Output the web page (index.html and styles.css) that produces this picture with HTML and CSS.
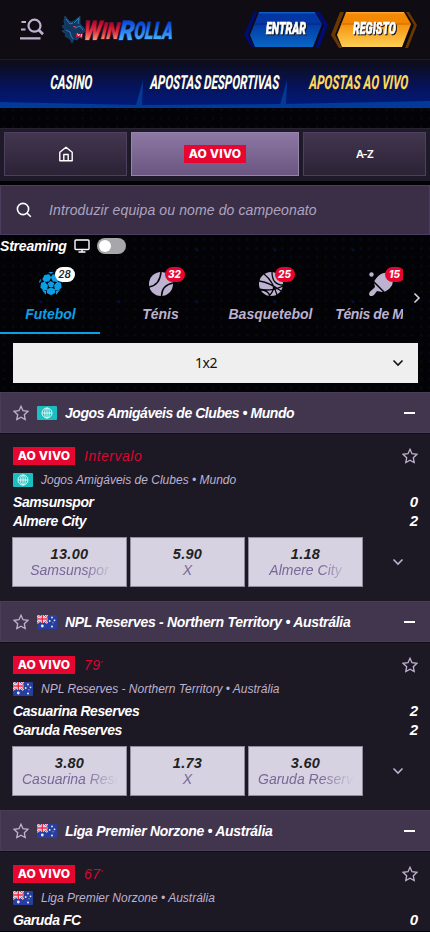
FILE: index.html
```html
<!DOCTYPE html>
<html lang="pt">
<head>
<meta charset="utf-8">
<meta name="viewport" content="width=device-width, initial-scale=1">
<title>WinRolla</title>
<link rel="stylesheet" href="styles.css">
</head>
<body>
<svg class="defs" width="0" height="0" aria-hidden="true">
  <defs>
    <linearGradient id="red" x1="0" y1="0" x2="0" y2="1"><stop offset="0.2" stop-color="#b8002c"/><stop offset="0.55" stop-color="#e23a48"/><stop offset="0.9" stop-color="#ffc38c"/></linearGradient>
    <linearGradient id="blue" x1="0" y1="0" x2="0" y2="1"><stop offset="0.2" stop-color="#0a46d8"/><stop offset="0.9" stop-color="#55c4ff"/></linearGradient>
    <linearGradient id="btnBlue" x1="0" y1="0" x2="0" y2="1"><stop offset="0" stop-color="#02359f"/><stop offset="0.33" stop-color="#0437a5"/><stop offset="0.36" stop-color="#023ba6"/><stop offset="1" stop-color="#0866c4"/></linearGradient>
    <linearGradient id="btnGold" x1="0" y1="0" x2="0" y2="1"><stop offset="0" stop-color="#f58a05"/><stop offset="0.34" stop-color="#f38600"/><stop offset="0.38" stop-color="#f59510"/><stop offset="1" stop-color="#ffd055"/></linearGradient>
    <clipPath id="ball"><circle cx="12" cy="12" r="12"/></clipPath>
    <path id="patch" d="M12 .8l4.200 2.200v3.600L12 8.800 7.800 6.600V3z"/>
  </defs>
  <symbol id="star" viewBox="0 0 16 16"><path d="M8 1.300 10 5.700l4.900.6-3.600 3.400.9 4.900L8 12.300l-4.200 2.300.9-4.900L1.100 6.300 6 5.700z" fill="none" stroke="#bdb2cf" stroke-width="1.300"/></symbol>
  <symbol id="chev" viewBox="0 0 12 8"><path d="m1.500 1.500 4.500 4.500 4.500-4.500" fill="none" stroke="currentColor" stroke-width="1.600"/></symbol>
  <symbol id="world" viewBox="0 0 20 14"><rect width="20" height="14" rx="1" fill="#1cbfc0"/><g fill="none" stroke="#d9f6f4"><circle cx="10" cy="7" r="5"/><ellipse cx="10" cy="7" rx="2.300" ry="5"/><path d="M5 7h10M10 2v10"/></g></symbol>
  <symbol id="aus" viewBox="0 0 20 14"><rect width="20" height="14" rx="1" fill="#263fa0"/><path d="M0 0l10.500 8M10.500 0 0 8" stroke="#fff" stroke-width="2.200"/><path d="M0 0l10.500 8M10.500 0 0 8" stroke="#e8304a" stroke-width=".9"/><path d="M5.300 0v8M0 4h10.500" stroke="#fff" stroke-width="2.800"/><path d="M5.300 0v8M0 4h10.500" stroke="#e8283f" stroke-width="1.500"/><g fill="#e8edff"><circle cx="5.300" cy="11" r="1.400"/><circle cx="15" cy="2.500" r=".9"/><circle cx="12.700" cy="6" r=".9"/><circle cx="17.500" cy="5.300" r=".9"/><circle cx="15" cy="11.500" r="1"/><circle cx="16" cy="7.800" r=".5"/></g></symbol>
</svg>

<header class="top">
  <svg class="menu" width="26" height="24" viewBox="0 0 26 24" fill="none" stroke="#bdb2cf" stroke-width="2.200"><path d="M1.500 4h4.500M1 11.500h4.500M0 20.300h20.500"/><circle cx="14.500" cy="7.700" r="6"/><path d="m18.500 11.700 4.500 4.500" stroke-width="2.700"/></svg>
  <svg class="logo" width="114" height="30" viewBox="0 0 114 30">
    <path d="M4 1l5 6 4-1 6-5v8l4 4 1 3-3 3-3 0 1 3-3 3-3-1-2 4-2-4-5-3 1-2-4-3 3-1-3-4 3-1-1-4z" fill="#12365f" stroke="#1d578c" stroke-width=".6"/>
    <path d="M5 4l4 5 3-1M13 8l5-5-1 6M5 15l4 2 1 4 2 3M14 13l5-2 3 4" fill="none" stroke="#3e91cd" stroke-width=".8"/>
    <path d="m15 18 4 1 3 0-1 5-3-2-3 1z" fill="#b91c36"/><path d="m16.500 18.500 1 2.500 1-2m2 0-.5 3" stroke="#fff" stroke-width=".8" fill="none"/><path d="m12 11 3.500.6-2.500 1z" fill="#ff4b32"/>
    <g font-family="Roboto" font-weight="900" font-style="italic" stroke-width="1.100" paint-order="stroke" transform="skewX(-5) translate(1.800 0)">
      <text x="22" y="24.500" font-size="27" fill="url(#red)" stroke="#5a142b" textLength="18" lengthAdjust="spacingAndGlyphs">W</text>
      <text x="40" y="24.500" font-size="23" fill="url(#red)" stroke="#5a142b" textLength="18" lengthAdjust="spacingAndGlyphs">IN</text>
      <text x="58" y="24.500" font-size="27" fill="url(#blue)" stroke="#093583" textLength="15" lengthAdjust="spacingAndGlyphs">R</text>
      <text x="73" y="24.500" font-size="24" fill="url(#blue)" stroke="#093583" textLength="39" lengthAdjust="spacingAndGlyphs">OLLA</text>
    </g>
  </svg>
  <div class="auth">
    <svg width="84" height="37" viewBox="0 0 84 37">
      <path d="M10 0h66l8 13-9 23H8L0 23z" fill="#000c75"/><path d="M13 0h59l8 13-9 23H11L4 23z" fill="#0c0b12"/><path d="M15 0h56l7 12-9 23H11L6 23z" fill="url(#btnBlue)"/><path d="M10 12h68" stroke="#05237c"/><path d="M15 .8h56" stroke="#1470dd"/>
      <text x="22" y="22" class="btn-text" textLength="40" lengthAdjust="spacingAndGlyphs">ENTRAR</text>
    </svg>
    <svg width="87" height="37" viewBox="0 0 87 37">
      <path d="M9 0h69l8 13-9 23H8L0 23z" fill="#6b3700"/><path d="M13 0h62l8 13-9 23H11L4 23z" fill="#0c0b12"/><path d="M15 0h58l7 12-9 23H11L6 23z" fill="url(#btnGold)"/><path d="M10 12h69" stroke="#c96e07"/><path d="M15 .8h58" stroke="#ffb044"/>
      <text x="22" y="22" class="btn-text" textLength="43" lengthAdjust="spacingAndGlyphs">REGISTO</text>
    </svg>
  </div>
</header>

<nav class="main-nav">
  <svg width="430" height="48" viewBox="0 0 430 48">
    <path d="M0 42l140 3 140-1 150-3v7H0z" fill="#013a99"/><path d="M136 45 143 20l-1 25zM280 45l7-25-1 25z" fill="#023b96"/>
    <g class="nav-text" transform="skewX(-3) translate(1.500 0)">
      <text x="50" y="29.500" textLength="42" lengthAdjust="spacingAndGlyphs">CASINO</text>
      <text x="150" y="29.500" textLength="129" lengthAdjust="spacingAndGlyphs">APOSTAS DESPORTIVAS</text>
      <text x="309" y="29.500" fill="#ffd65a" textLength="99" lengthAdjust="spacingAndGlyphs">APOSTAS AO VIVO</text>
    </g>
  </svg>
</nav>

<main>
  <div class="tabs">
    <div class="tab"><svg width="16" height="16" viewBox="0 0 16 16" fill="none" stroke="#fff" stroke-width="1.400" stroke-linejoin="round"><path d="M1.800 6.300 8 1.200l6.200 5.100v8.500H1.800zM5.800 14.800V8.500h4.400v6.300"/></svg></div>
    <div class="tab on"><span class="live">AO VIVO</span></div>
    <div class="tab az">A-Z</div>
  </div>
  <div class="search">
    <svg width="16" height="16" viewBox="0 0 16 16" fill="none" stroke="#fff" stroke-width="1.600"><circle cx="7" cy="7" r="5.600"/><path d="m11 11 3.800 3.800"/></svg>
    <span>Introduzir equipa ou nome do campeonato</span>
  </div>
  <div class="streaming"><b>Streaming</b>
    <svg width="16" height="14" viewBox="0 0 16 14" fill="none" stroke="#fff" stroke-width="1.400"><rect x="1" y="1" width="14" height="9.500" rx="1"/><path d="M8 10.500v2.500M4.500 13h7"/></svg>
    <i class="switch"></i>
  </div>
  <div class="sports-row">
    <div class="sports">
      <div class="sport on">
        <div class="pic"><svg width="24" height="24" viewBox="0 0 24 24"><g clip-path="url(#ball)" fill="#0ba0e6"><path d="m12 9 3.200 2.300-1.200 3.800h-4l-1.200-3.800z"/><use href="#patch" transform="rotate(36 12 12)"/><use href="#patch" transform="rotate(108 12 12)"/><use href="#patch" transform="rotate(180 12 12)"/><use href="#patch" transform="rotate(252 12 12)"/><use href="#patch" transform="rotate(324 12 12)"/><path d="M9 0h6l-3 2zM23 6l2 6-3-3zM21 18l-4 5 0-4zM1 6l-2 6 3-3zM3 18l4 5 0-4z"/></g></svg><span class="count">28</span></div>
        <span class="name">Futebol</span>
      </div>
      <div class="sport">
        <div class="pic"><svg width="24" height="24" viewBox="0 0 24 24"><circle cx="12" cy="12" r="12" fill="#bdb2cf"/><path d="M0 15Q11 13 12 0M12.500 24Q13 13 24 11" fill="none" stroke="#05060b" stroke-width="1.500"/></svg><span class="count">32</span></div>
        <span class="name">Ténis</span>
      </div>
      <div class="sport">
        <div class="pic"><svg width="24" height="24" viewBox="0 0 24 24"><circle cx="12" cy="12" r="12" fill="#bdb2cf"/><path d="M5 2q9 7 13 21M0 9q10 1 22 10M0 17q11 3 24-3M10 24q6-6 4-11M13 0q0 13 11 13M1 18q8 0 10 6" fill="none" stroke="#05060b" stroke-width="1.300"/></svg><span class="count">25</span></div>
        <span class="name">Basquetebol</span>
      </div>
      <div class="sport">
        <div class="pic"><svg width="24" height="24" viewBox="0 0 24 24"><circle cx="2.500" cy="2.500" r="2.200" fill="#bdb2cf"/><path d="M6 8Q13-2 21 2q6 7 0 14-4 4-8 4l-5-1-3 4Q1 26 0 22q0-2 4-5l2-2-1-5z" fill="#bdb2cf"/><path d="m4 9 11 11" stroke="#05060b" stroke-width="1.500"/></svg><span class="count">15</span></div>
        <span class="name mesa">Ténis de Mesa</span>
      </div>
    </div>
    <svg class="next" width="8" height="12" viewBox="0 0 8 12"><path d="m1.500 1.500 4.500 4.500L1.500 10.500" fill="none" stroke="#d7d1e0" stroke-width="1.600"/></svg>
  </div>
  <div class="select"><span>1x2</span><svg class="sel-chev" width="12" height="8"><use href="#chev"/></svg></div>

  <section>
    <div class="head"><svg width="16" height="16"><use href="#star"/></svg><svg width="20" height="14"><use href="#world"/></svg><h2 class="tight">Jogos Amigáveis de Clubes • Mundo</h2><i class="minus"></i></div>
    <div class="match">
      <div class="status"><span class="live">AO VIVO</span><em>Intervalo</em><svg width="16" height="16"><use href="#star"/></svg></div>
      <div class="league"><svg width="20" height="14"><use href="#world"/></svg><span>Jogos Amigáveis de Clubes • Mundo</span></div>
      <div class="team"><span>Samsunspor</span><b>0</b></div>
      <div class="team"><span>Almere City</span><b>2</b></div>
      <div class="odds">
        <div class="odd"><b>13.00</b><span class="fade-s">Samsunspor</span></div>
        <div class="odd"><b>5.90</b><span>X</span></div>
        <div class="odd"><b>1.18</b><span class="fade-s">Almere City</span></div>
        <svg width="12" height="8"><use href="#chev"/></svg>
      </div>
    </div>
  </section>
  <section>
    <div class="head"><svg width="16" height="16"><use href="#star"/></svg><svg width="20" height="14"><use href="#aus"/></svg><h2>NPL Reserves - Northern Territory • Austrália</h2><i class="minus"></i></div>
    <div class="match">
      <div class="status"><span class="live">AO VIVO</span><em>79<small>'</small></em><svg width="16" height="16"><use href="#star"/></svg></div>
      <div class="league"><svg width="20" height="14"><use href="#aus"/></svg><span>NPL Reserves - Northern Territory • Austrália</span></div>
      <div class="team"><span>Casuarina Reserves</span><b>2</b></div>
      <div class="team"><span>Garuda Reserves</span><b>2</b></div>
      <div class="odds">
        <div class="odd"><b>3.80</b><span class="fade">Casuarina Reserves</span></div>
        <div class="odd"><b>1.73</b><span>X</span></div>
        <div class="odd"><b>3.60</b><span class="fade">Garuda Reserves</span></div>
        <svg width="12" height="8"><use href="#chev"/></svg>
      </div>
    </div>
  </section>
  <section>
    <div class="head"><svg width="16" height="16"><use href="#star"/></svg><svg width="20" height="14"><use href="#aus"/></svg><h2>Liga Premier Norzone • Austrália</h2><i class="minus"></i></div>
    <div class="match last">
      <div class="status"><span class="live">AO VIVO</span><em>67<small>'</small></em><svg width="16" height="16"><use href="#star"/></svg></div>
      <div class="league"><svg width="20" height="14"><use href="#aus"/></svg><span>Liga Premier Norzone • Austrália</span></div>
      <div class="team"><span>Garuda FC</span><b>0</b></div>
    </div>
  </section>
</main>
</body>
</html>
```
FILE: styles.css
```css
* { box-sizing: border-box; }
html, body { height: 932px; overflow: hidden; }
body {
  margin: 0;
  width: 430px;
  color: #fff;
  font: 14px/18px "Liberation Sans", sans-serif;
  background-color: #030306;
  background-image:
    radial-gradient(circle, #04103c 0 1px, transparent 1.800px),
    radial-gradient(circle, #050a1e 0 .8px, transparent 1.500px);
  background-size: 78px 52px, 8.700px 8.700px;
  background-position: 2px 16px, 0 1px;
}
svg { display: block; flex: none; }
.defs { position: absolute; }

.top {
  display: flex;
  align-items: flex-start;
  height: 60px;
  padding: 12px 12px 0 20px;
  background: #0f0d13;
  border-bottom: 1px solid #25181e;
}
.menu { margin-top: 6px; }
.logo { margin: 3px 0 0 15px; overflow: visible; }
.auth { display: flex; gap: 3px; margin-left: auto; }
.btn-text {
  font: italic 900 17px Roboto, sans-serif;
  fill: #fff;
  stroke: #fff;
  stroke-width: .6px;
  filter: drop-shadow(1px 1px 0 #111722);
}
.main-nav { height: 48px; background: linear-gradient(#0e0c16, #06135a 55%, #001b7d); }
.nav-text { font: italic 800 19.500px Roboto, sans-serif; fill: #fffbe9; }
.nav-text text[fill] { fill: #ffd65a; }

.tabs {
  display: flex;
  gap: 4px;
  height: 53px;
  margin-top: 20px;
  padding: 3px 4px 5px 4px;
  background: #1f1a29;
  border-top: 1px solid #29232f;
}
.tab {
  display: flex;
  align-items: center;
  justify-content: center;
  width: 123px;
  height: 44px;
  border: 1px solid #4c405e;
  background: linear-gradient(#43364f, #2b2236);
}
.tab.on { width: 168px; border-color: #9585aa; background: linear-gradient(#8c78a2, #6b5682); }
.az { font: 600 11px Inter, sans-serif; letter-spacing: -.9px; }
.live {
  display: block;
  width: 62px;
  height: 18px;
  background: #e6062f;
  font: 800 12px/18px Inter, sans-serif;
  letter-spacing: .2px;
  text-align: center;
  white-space: nowrap;
}
.search {
  display: flex;
  align-items: center;
  gap: 17px;
  height: 50px;
  margin-top: 4px;
  padding-left: 15px;
  background: #3a2f47;
  border: 1px solid #4a3d5d;
  color: #afa4bf;
  font-style: italic;
  letter-spacing: .12px;
}
.streaming { display: flex; align-items: center; gap: 7px; height: 22px; }
.streaming b { font-style: italic; letter-spacing: -.2px; }
.switch { width: 29px; height: 16px; border-radius: 8px; background: #a7a7a9; padding: 2px; }
.switch::before { content: ""; display: block; width: 12px; height: 12px; border-radius: 50%; background: #fff; }

.sports-row { display: flex; height: 77px; }
.sports { display: flex; gap: 10px; width: 403px; overflow: hidden; }
.sport {
  display: flex;
  flex: none;
  flex-direction: column;
  align-items: center;
  width: 100px;
  padding: 15px 0 0 1px;
  color: #bdb2cf;
  border-bottom: 2px solid transparent;
  white-space: nowrap;
}
.sport.on { color: #0ba0e6; border-color: #0ba0e6; }
.pic { position: relative; }
.count {
  position: absolute;
  left: 16px;
  top: -5px;
  width: 20px;
  height: 15px;
  border-radius: 8px;
  background: #e6062f;
  color: #fff;
  font: italic 800 10px/15px Inter, sans-serif;
  text-align: center;
}
.on .count { background: #fff; color: #222; font-weight: 600; }
.name { margin-top: 9px; font-weight: 700; font-style: italic; }
.mesa { letter-spacing: -.4px; }
.next { margin: 35px 0 0 10px; }

.select {
  display: flex;
  align-items: center;
  width: 405px;
  height: 40px;
  margin: 9px 0 9px 13px;
  padding: 0 14px 0 182px;
  background: #efefef;
  color: #111;
  font-family: "Noto Sans", sans-serif;
  letter-spacing: -.5px;
}
.sel-chev { margin-left: auto; }

.head {
  display: flex;
  align-items: center;
  height: 41px;
  padding: 0 15px 0 12px;
  background: #42364f;
  border: 1px solid #4a3d58;
  border-right: 0;
}
.head svg + svg { margin-left: 8px; }
h2 { margin: 0 0 0 8px; font-size: 14px; font-style: italic; letter-spacing: -.29px; white-space: nowrap; }
h2.tight { letter-spacing: -.45px; }
.minus { width: 11px; height: 2px; margin-left: auto; background: #fff; }
.match { height: 168px; padding: 13px 12px 0 13px; background: #1c1824; border-top: 1px solid #100d15; }
.match.last { height: 80px; }
.status { display: flex; align-items: center; height: 18px; }
.status em { margin-left: 9px; color: #d90633; letter-spacing: .5px; }
.status svg { margin-left: auto; }
small { font-size: 9px; line-height: 0; vertical-align: 3px; }
.league { display: flex; align-items: center; gap: 8px; height: 14px; margin: 8px 0 6px; color: #bdb2cf; font-size: 12px; font-style: italic; }
.team { display: flex; justify-content: space-between; height: 18.500px; font-weight: 700; font-style: italic; letter-spacing: -.42px; }
.team b { letter-spacing: 0; font-size: 15px; }
.odds { display: flex; align-items: center; gap: 3px; margin: 7px 0 0 -1px; color: #bdb2cf; }
.odd {
  width: 115px;
  height: 50px;
  padding: 8px 8px 0;
  background: #d6d2e1;
  border: 1px solid #918b9e;
  color: #222;
  text-align: center;
  font-style: italic;
  line-height: 16px;
}
.odd b, .odd span { display: block; }
.odd b { font-size: 14.500px; letter-spacing: .3px; }
.odd span { color: #766898; overflow: hidden; white-space: nowrap; }
.odds svg { margin-left: 26px; }
.odd .fade { padding-left: 1px; text-align: left; mask-image: linear-gradient(90deg, #000 65%, transparent); }
.fade-s { mask-image: linear-gradient(90deg, #000 65%, transparent 95%); }
```
